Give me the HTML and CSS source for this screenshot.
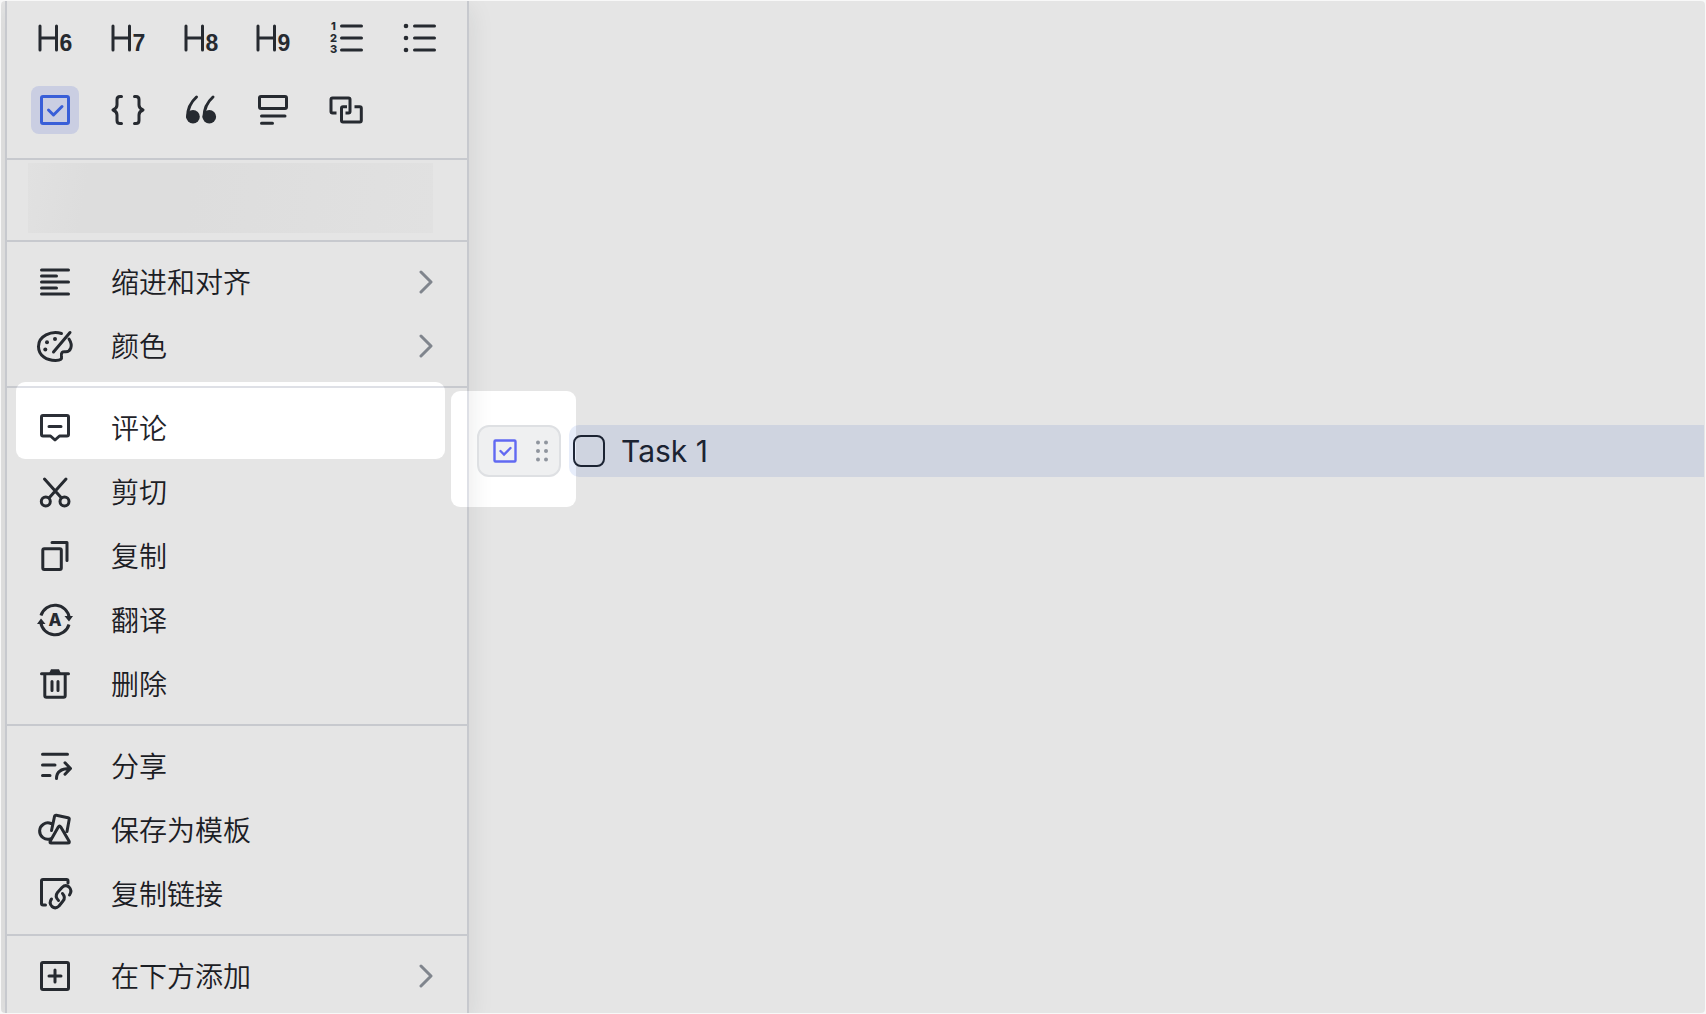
FILE: index.html
```html
<!DOCTYPE html>
<html lang="zh-CN">
    <head>
        <meta charset="UTF-8" />
        <meta name="viewport" content="width=device-width, initial-scale=1.0" />
        <title>Task 1</title>
        <link rel="stylesheet" href="styles.css">
    </head>
    <body>
        <div class="frame">
            <nav class="menu">
                <div class="block-types">
                    <button class="type" aria-label="H6">
                        <svg class="icon" viewBox="0 0 36 36"><path d="M3 6V30M19.500 6V30M3 18H19.500" /><text class="digit" x="29" y="31">6</text></svg>
                    </button>
                    <button class="type" aria-label="H7">
                        <svg class="icon" viewBox="0 0 36 36"><path d="M3 6V30M19.500 6V30M3 18H19.500" /><text class="digit" x="29" y="31">7</text></svg>
                    </button>
                    <button class="type" aria-label="H8">
                        <svg class="icon" viewBox="0 0 36 36"><path d="M3 6V30M19.500 6V30M3 18H19.500" /><text class="digit" x="29" y="31">8</text></svg>
                    </button>
                    <button class="type" aria-label="H9">
                        <svg class="icon" viewBox="0 0 36 36"><path d="M2 6V30M18.500 6V30M2 18H18.500" /><text class="digit" x="28" y="31">9</text></svg>
                    </button>
                    <button class="type" aria-label="有序列表">
                        <svg class="icon" viewBox="0 0 36 36"><path d="M12.500 6H32.500M12.500 18H32.500M12.500 30H32.500" /><text class="num"><tspan x="4.500" y="10">1</tspan><tspan x="4.500" y="22">2</tspan><tspan x="4.500" y="33">3</tspan></text></svg>
                    </button>
                    <button class="type" aria-label="无序列表">
                        <svg class="icon" viewBox="0 0 36 36"><path d="M12.500 6H32.500M12.500 18H32.500M12.500 30H32.500" /><g class="solid"><circle cx="4" cy="6" r="2.300" /><circle cx="4" cy="18" r="2.300" /><circle cx="4" cy="30" r="2.300" /></g></svg>
                    </button>
                    <button class="type active" aria-label="任务">
                        <svg class="icon" viewBox="0 0 36 36"><rect x="4.500" y="4.500" width="27" height="27" rx="1.500" /><path d="M11.500 18L16.500 23L25 14.500" /></svg>
                    </button>
                    <button class="type" aria-label="代码块">
                        <svg class="icon" viewBox="0 0 36 36"><path d="M11.500 4.500H10Q7 4.500 7 7.500V13Q7 16.500 3 18Q7 19.500 7 23V28.500Q7 31.500 10 31.500H11.500M24.500 4.500H26Q29 4.500 29 7.500V13Q29 16.500 33 18Q29 19.500 29 23V28.500Q29 31.500 26 31.500H24.500" /></svg>
                    </button>
                    <button class="type" aria-label="引用">
                        <svg class="icon" viewBox="0 0 36 36"><path d="M13.500 5Q4.500 13 4.500 25M30 5Q21 13 21 25" /><g class="solid"><circle cx="10" cy="24.800" r="6.800" /><circle cx="26.300" cy="24.800" r="6.800" /></g></svg>
                    </button>
                    <button class="type" aria-label="高亮块">
                        <svg class="icon" viewBox="0 0 36 36"><rect x="3.500" y="4.500" width="27" height="12" rx="1.500" /><path d="M5.500 24H29M5.500 31.300H16.500" /></svg>
                    </button>
                    <button class="type" aria-label="同步块">
                        <svg class="icon butt" viewBox="0 0 36 36"><path d="M7.500 21H3.500Q2 21 2 19.500V7.500Q2 6 3.500 6H19.500Q21 6 21 7.500V19.500Q21 21 19.500 21H16.500M25.500 14.700H30.800Q32.300 14.700 32.300 16.200V28.500Q32.300 30 30.800 30H14Q12.500 30 12.500 28.500V16.200Q12.500 14.700 14 14.700H18" /></svg>
                    </button>
                </div>

                <div class="menu-section">
                    <div class="placeholder"></div>
                </div>

                <div class="menu-section">
                    <button class="item">
                        <svg class="icon" viewBox="0 0 36 36"><path d="M4.500 6H31.500M4.500 12H19.500M4.500 18H31.500M4.500 24H19.500M4.500 30H31.500" /></svg>
                        <span>缩进和对齐</span>
                        <svg class="arrow" viewBox="0 0 16 24"><path d="M4 2L14 12L4 22" /></svg>
                    </button>
                    <button class="item">
                        <svg class="icon" viewBox="0 0 36 36"><path d="M24.500 5.500C14 2.500 1.500 8 1.500 18.500C1.500 28 10 32.500 18.500 32.500C24 32.500 25 31 24.500 28C24 24.500 25 23.500 28.500 23.800C33.500 24 36.500 18 32 11M33 4.500L16.500 24" /><g class="solid"><circle cx="10" cy="14.300" r="2" /><circle cx="18" cy="11" r="2" /><circle cx="8.300" cy="21.500" r="2" /></g></svg>
                        <span>颜色</span>
                        <svg class="arrow" viewBox="0 0 16 24"><path d="M4 2L14 12L4 22" /></svg>
                    </button>
                </div>

                <div class="menu-section">
                    <button class="item">
                        <svg class="icon" viewBox="0 0 36 36"><path d="M13.500 26L18 30L22.500 26H30Q31.500 26 31.500 24.500V7Q31.500 5.500 30 5.500H6Q4.500 5.500 4.500 7V24.500Q4.500 26 6 26ZM12 16.500H24" /></svg>
                        <span>评论</span>
                    </button>
                    <button class="item">
                        <svg class="icon" viewBox="0 0 36 36"><path d="M7.500 5L24.500 24M29 5L12 24" /><circle cx="8.800" cy="27.500" r="4.500" /><circle cx="27.500" cy="27.500" r="4.500" /></svg>
                        <span>剪切</span>
                    </button>
                    <button class="item">
                        <svg class="icon" viewBox="0 0 36 36"><rect x="5.800" y="10.800" width="18.500" height="20.700" rx="1.500" /><path d="M15 4.500H30V22.500" /></svg>
                        <span>复制</span>
                    </button>
                    <button class="item">
                        <svg class="icon butt" viewBox="0 0 36 36"><path d="M4 13.500A14.500 14.500 0 0 1 32.300 16M32 22.500A14.500 14.500 0 0 1 3.700 20" /><g class="solid"><path d="M27.500 14H36L32 19.500ZM0 22H8.500L4 16.500Z" /></g><text class="letter" x="18" y="24">A</text></svg>
                        <span>翻译</span>
                    </button>
                    <button class="item">
                        <svg class="icon" viewBox="0 0 36 36"><path d="M4.500 7.700H31.500M7.800 8V29.500Q7.800 31.200 9.500 31.200H26.500Q28.200 31.200 28.200 29.500V8M15 15.500V24.500M21 15.500V24.500" /><path class="solid" d="M12 7.500L14 3.300H22L24 7.500Z" /></svg>
                        <span>删除</span>
                    </button>
                </div>

                <div class="menu-section">
                    <button class="item">
                        <svg class="icon" viewBox="0 0 36 36"><path d="M5.500 6.300H30.500M5.500 17H18M5.500 27.500H13M19.500 30.500C19.500 24 24 20.500 33 20.500M28 14.800L33.500 20.500L28 26.200" /></svg>
                        <span>分享</span>
                    </button>
                    <button class="item">
                        <svg class="icon" viewBox="0 0 36 36"><path d="M14 11.500A8.200 8.200 0 1 0 13.500 26.800M14.500 18.500L17.500 4.500Q17.800 3 19.300 3.300L31 5.800Q32.500 6.200 32.200 7.500L30 19.500M21.300 15L13.300 29Q12.300 31 14.300 31H31Q33 31 32 29L23.800 15Q22.500 13 21.300 15Z" /></svg>
                        <span>保存为模板</span>
                    </button>
                    <button class="item">
                        <svg class="icon" viewBox="0 0 36 36"><path d="M31 7V5Q31 3.500 29.500 3.500H6Q4.500 3.500 4.500 5V27.500Q4.500 29 6 29H8.500" /><path d="M21.500 24.500Q17.500 20.500 20.500 16.500L25 11.500Q28.500 8 32 11Q35.500 14.500 32.500 19M25.500 17.500Q29 21.500 26 25L22 30Q18.500 33.500 15 30.500Q11.500 27 14.500 23" /></svg>
                        <span>复制链接</span>
                    </button>
                </div>

                <div class="menu-section">
                    <button class="item">
                        <svg class="icon" viewBox="0 0 36 36"><rect x="4.500" y="4.500" width="27" height="27" rx="1.500" /><path d="M12 18H24M18 12V24" /></svg>
                        <span>在下方添加</span>
                        <svg class="arrow" viewBox="0 0 16 24"><path d="M4 2L14 12L4 22" /></svg>
                    </button>
                </div>
            </nav>

            <main class="doc">
                <button class="handle" aria-label="拖动">
                    <svg class="handle-check" viewBox="0 0 24 24"><rect x="1.500" y="1.500" width="21" height="21" rx="1" /><path d="M7.500 12L11 15.500L17.500 9" /></svg>
                    <svg class="handle-dots" viewBox="0 0 12 24"><circle cx="2" cy="3.500" r="2" /><circle cx="10" cy="3.500" r="2" /><circle cx="2" cy="12" r="2" /><circle cx="10" cy="12" r="2" /><circle cx="2" cy="20.500" r="2" /><circle cx="10" cy="20.500" r="2" /></svg>
                </button>
                <div class="task">
                    <input type="checkbox" id="task1" />
                    <label for="task1">Task 1</label>
                </div>
            </main>

            <!-- dims everything except the two spots -->
            <svg class="dim" aria-hidden="true">
                <mask id="spots">
                    <rect width="100%" height="100%" fill="white" />
                    <rect x="15" y="381" width="429" height="77" rx="9" fill="black" />
                    <rect x="450" y="390" width="125" height="116" rx="9" fill="black" />
                </mask>
                <rect width="100%" height="100%" mask="url(#spots)" />
            </svg>
        </div>
    </body>
</html>
```

FILE: styles.css
```css
* {
    box-sizing: border-box;
}

body {
    margin: 0;
    background-color: #f8f8f8;
    color: #1f2329;
    font-family: "Noto Sans CJK SC", sans-serif;
}

button {
    border: none;
    padding: 0;
    background: none;
    color: inherit;
    font: inherit;
    cursor: pointer;
}

.frame {
    position: relative;
    display: flex;
    height: calc(100vh - 2px);
    margin: 1px;
    padding-left: 4px;
    overflow: hidden;
    border-radius: 4px;
    background-color: white;
}

/* menu */
.menu {
    flex: none;
    width: 464px;
    border: 2px solid #dee0e6;
    border-width: 0 2px;
    box-shadow: 0 8px 24px rgba(31, 35, 41, 0.1);
}

.block-types {
    display: grid;
    grid-template-columns: repeat(6, 48px);
    gap: 24px 25px;
    padding: 13px 24px 24px;
}

.type {
    display: flex;
    align-items: center;
    justify-content: center;
    height: 48px;
    border-radius: 8px;
    color: #2b2f36;
}

.type.active {
    background-color: #e1e6fc;
    color: #406af1;
}

.menu-section {
    padding: 8px 0;
    border-top: 2px solid #dee0e6;
}

.placeholder {
    height: 70px;
    margin: -5px 34px -1px 21px;
    background: linear-gradient(100deg, #fbfbfb, #f7f7f7 15%, #f7f7f7 40%, #fbfbfb);
}

.item {
    display: flex;
    align-items: center;
    gap: 38px;
    width: 100%;
    height: 64px;
    padding: 0 34px 0 30px;
    font-size: 28px;
    font-weight: 350;
    line-height: 40px;
}

.item span {
    padding-bottom: 2px;
}

.item .icon {
    color: #2b2f36;
}

.icon {
    flex: none;
    width: 36px;
    height: 36px;
    overflow: visible;
    fill: none;
    stroke: currentColor;
    stroke-width: 3;
    stroke-linecap: round;
    stroke-linejoin: round;
}

.butt {
    stroke-linecap: butt;
}

.icon .solid,
.icon text {
    fill: currentColor;
    stroke: none;
}

.icon text {
    font-family: Inter, sans-serif;
    text-anchor: middle;
}

.icon .digit {
    font-family: "Liberation Sans", sans-serif;
    font-size: 23px;
    font-weight: 700;
}

.num {
    font-size: 11px;
    font-weight: 800;
}

.letter {
    font-size: 17px;
    font-weight: 800;
}

.arrow {
    width: 16px;
    height: 24px;
    margin-left: auto;
    fill: none;
    stroke: #8f959e;
    stroke-width: 3;
    stroke-linecap: round;
    stroke-linejoin: round;
}

/* document */
.doc {
    flex: 1;
    display: flex;
    align-items: flex-start;
    gap: 8px;
    padding: 424px 1px 0 8px;
    z-index: 1;
}

.handle {
    display: flex;
    align-items: center;
    justify-content: space-between;
    width: 84px;
    height: 52px;
    padding: 0 11px 0 14px;
    border: 2px solid #dee0e3;
    border-radius: 12px;
    background-color: #eff0f1;
}

.handle-check {
    width: 24px;
    height: 24px;
    fill: none;
    stroke: #6169f2;
    stroke-width: 2.4;
    stroke-linecap: round;
}

.handle-dots {
    width: 12px;
    height: 24px;
    fill: #8f959e;
}

.task {
    flex: 1;
    display: flex;
    align-items: center;
    gap: 16px;
    height: 52px;
    padding-left: 4px;
    border-radius: 10px 0 0 10px;
    background-color: #e7edfa;
    font-family: Inter, sans-serif;
    font-size: 30px;
}

.task input {
    appearance: none;
    width: 32px;
    height: 32px;
    margin: 0;
    border: 2px solid #1f2738;
    border-radius: 8px;
}

.task label {
    color: #1f2738;
}

.dim {
    position: absolute;
    inset: 0;
    width: 100%;
    height: 100%;
    fill: rgba(0, 0, 0, 0.1);
    pointer-events: none;
    z-index: 2;
}
```
